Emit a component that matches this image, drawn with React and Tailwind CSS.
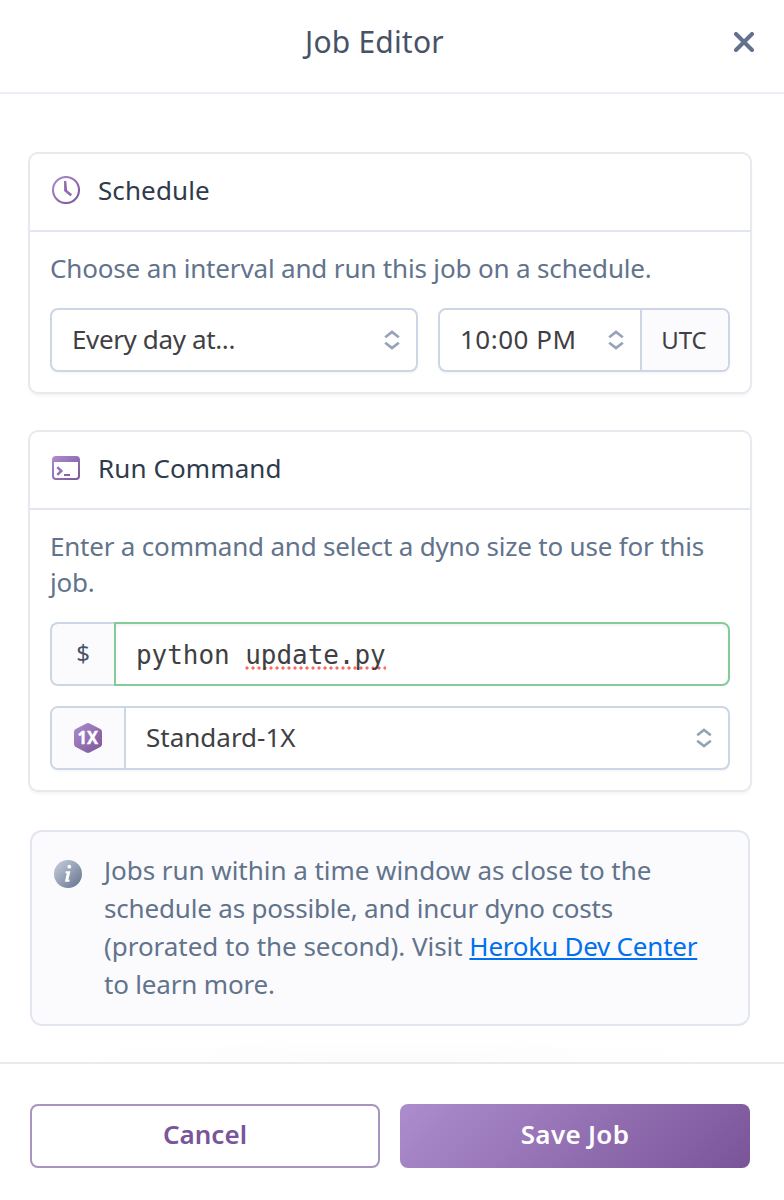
import React from "react";

function UpDown() {
  return (
    <svg className="h-5 w-4 shrink-0" viewBox="0 0 16 20" fill="none" stroke="#96a3b6" strokeWidth="2.7">
      <path d="M1.200 7.200 8 1.900l6.800 5.300" />
      <path d="M1.200 12.800 8 18.100l6.800-5.300" />
    </svg>
  );
}

function Gradient({ id, from = "#ad8dcd", to = "#7a5499" }) {
  return (
    <defs>
      <linearGradient id={id} x1="0" y1="0" x2="1" y2="1">
        <stop offset="0" stopColor={from} />
        <stop offset="1" stopColor={to} />
      </linearGradient>
    </defs>
  );
}

function ClockIcon() {
  return (
    <svg className="h-7 w-7" viewBox="0 0 28 28" fill="none">
      <Gradient id="clock" />
      <circle cx="14" cy="14" r="13" stroke="url(#clock)" strokeWidth="2.1" />
      <path d="M12.100 5h2.200l.8 9.200 5 4-1.700 2.100-6.300-5.200z" fill="#9068b0" />
    </svg>
  );
}

function TerminalIcon() {
  return (
    <svg className="h-6 w-7" viewBox="0 0 28 24" fill="none">
      <Gradient id="term" />
      <path
        fillRule="evenodd"
        fill="url(#term)"
        d="M4 0h20a4 4 0 0 1 4 4v16a4 4 0 0 1-4 4H4a4 4 0 0 1-4-4V4a4 4 0 0 1 4-4zM2 6v14a2 2 0 0 0 2 2h20a2 2 0 0 0 2-2V6z"
      />
      <path d="M5.300 11.200 9.300 15l-4 3.800" stroke="#966fb5" strokeWidth="2.500" />
      <path d="M12 19h6" stroke="#8a63aa" strokeWidth="2" />
    </svg>
  );
}

function DynoIcon() {
  return (
    <svg className="h-[30px] w-7" viewBox="0 0 28 30">
      <Gradient id="dyno" />
      <path
        fill="url(#dyno)"
        d="M12.300.5a3.500 3.500 0 0 1 3.400 0l10.600 5.600A3.200 3.200 0 0 1 28 9v12a3.200 3.200 0 0 1-1.700 2.900l-10.600 5.600a3.500 3.500 0 0 1-3.400 0L1.700 23.900A3.200 3.200 0 0 1 0 21V9a3.200 3.200 0 0 1 1.700-2.900z"
      />
      <text x="13.800" y="21" textAnchor="middle" textLength="20.500" lengthAdjust="spacingAndGlyphs" fill="#fff" stroke="#fff" strokeWidth="0.4" className="font-['Noto_Sans',sans-serif] text-[17px] font-bold">
        1X
      </text>
    </svg>
  );
}

function InfoIcon() {
  return (
    <svg className="h-7 w-7 shrink-0" viewBox="0 0 28 28">
      <Gradient id="info" from="#c8d1df" to="#62718c" />
      <circle cx="14" cy="14" r="14" fill="url(#info)" />
      <circle cx="15.300" cy="6.700" r="1.900" fill="#fff" />
      <path d="M11.800 11.200h4.600l-2 8.600h1.300l-.4 2h-4.400l1.900-8.600h-1.400z" fill="#fff" />
    </svg>
  );
}

function Card({ icon, title, children }) {
  return (
    <section className="rounded-lg bg-white shadow-[0_0_0_2px_#e8e8ef,0_3px_4px_rgba(0,0,0,0.07)]">
      <header className="flex h-[78px] items-center gap-[18px] border-b-2 border-[#e2e6f0] pb-1 pl-[22px]">
        {icon}
        <h2 className="text-[26px] leading-9 tracking-[0.1px] text-[#2f3b4c]">{title}</h2>
      </header>
      <div className="px-5 pt-[18px] pb-5">{children}</div>
    </section>
  );
}

export default function App() {
  return (
    <div className="flex h-[1200px] w-[784px] flex-col bg-white font-['Noto_Sans',sans-serif]">
      <header className="flex h-[94px] items-center justify-between border-b-2 border-[#ebeef4] pr-[30px] pb-[9px] pl-[305px]">
        <h1 className="text-[30px] leading-9 tracking-[0.2px] text-[#475266]">Job Editor</h1>
        <button aria-label="Close">
          <svg className="h-5 w-5" viewBox="0 0 20 20" stroke="#62718c" strokeWidth="4" strokeLinecap="round">
            <path d="M2 2l16 16M18 2 2 18" />
          </svg>
        </button>
      </header>

      <main className="flex h-[968px] flex-col bg-[radial-gradient(ellipse_360px_24px_at_50%_100%,#fbfbfb,#ffffff)] pt-[60px] pr-[34px] pl-[30px]">
        <Card icon={<ClockIcon />} title="Schedule">
          <p className="text-[26px] leading-9 tracking-[-0.16px] text-[#62738c]">Choose an interval and run this job on a schedule.</p>
          <div className="mt-[22px] flex h-16 gap-5 text-[26px] text-[#3f3f44]">
            <div className="flex w-[368px] items-center justify-between rounded-lg border-2 border-[#ccd6e5] bg-white pr-4 pl-5 shadow-[0_2px_2px_rgba(0,0,0,0.03)]">
              <span className="pb-[2px] tracking-[-0.37px]">Every day at...</span>
              <UpDown />
            </div>
            <div className="flex flex-1 rounded-lg border-2 border-[#ccd6e5] bg-white shadow-[0_2px_2px_rgba(0,0,0,0.03)]">
              <div className="flex flex-1 items-center justify-between pr-4 pl-5">
                <span className="pb-[2px] tracking-[0.5px]">10:00 PM</span>
                <UpDown />
              </div>
              <div className="flex w-[88px] items-center justify-center rounded-r-md border-l-2 border-[#ccd6e5] bg-[#fbfbfd] pr-[2px] text-[24px]">
                UTC
              </div>
            </div>
          </div>
        </Card>

        <div className="mt-10">
          <Card icon={<TerminalIcon />} title="Run Command">
            <p className="text-[26px] leading-9 tracking-[-0.2px] text-[#62738c]">
              Enter a command and select a dyno size to use for this
              <br />
              job.
            </p>
            <div className="mt-[22px] flex h-16">
              <div className="flex w-16 items-center justify-center rounded-l-lg border-2 border-r-0 border-[#ccd6e5] bg-[#fbfbfd] pb-[2px] text-[24px] text-[#475266]">
                $
              </div>
              <div className="flex flex-1 items-center rounded-r-lg border-2 border-[#84cb97] bg-white pt-[2px] pl-5 font-['DejaVu_Sans_Mono',monospace] text-[26px] leading-[30px] tracking-[-0.05px] whitespace-pre text-[#3f3f44] shadow-[inset_0_2px_3px_rgba(0,0,0,0.05)]">
                <span>python </span>
                <span className="bg-[radial-gradient(circle,#fb6a62_1.3px,transparent_1.9px)] bg-[length:6px_4px] bg-[position:-1px_26px] bg-repeat-x">update.py</span>
              </div>
            </div>
            <div className="mt-5 flex h-16 rounded-lg border-2 border-[#ccd6e5] bg-white text-[26px] text-[#3f3f44] shadow-[0_2px_2px_rgba(0,0,0,0.03)]">
              <div className="flex w-[74px] items-center justify-center rounded-l-md border-r-2 border-[#ccd6e5] bg-[#fbfbfd]">
                <DynoIcon />
              </div>
              <div className="flex flex-1 items-center justify-between pr-4 pl-5">
                <span className="pb-[2px]">Standard-1X</span>
                <UpDown />
              </div>
            </div>
          </Card>
        </div>

        <aside className="mt-10 flex h-[196px] gap-[22px] rounded-xl border-2 border-[#e2e6f0] bg-[#fbfbfd] pt-[19px] pl-[22px]">
          <div className="pt-[9px]">
            <InfoIcon />
          </div>
          <p className="text-[26px] leading-[38px] tracking-[-0.18px] text-[#62738c]">
            <span className="tracking-[-0.04px]">Jobs run within a time window as close to the</span>
            <br />
            schedule as possible, and incur dyno costs
            <br />
            <span className="tracking-[-0.04px]">(prorated to the second). Visit </span>
            <a className="tracking-[-0.22px] text-[#0070ee] underline decoration-2 underline-offset-2 [text-decoration-skip-ink:none]">Heroku Dev Center</a>
            <br />
            to learn more.
          </p>
        </aside>
      </main>

      <footer className="flex flex-1 gap-5 border-t-2 border-[#e9e9ef] bg-white pt-10 pl-[30px] text-[26px] font-semibold">
        <button className="h-16 w-[350px] rounded-lg border-2 border-[#a994c0] pb-[3px] text-[#79559b]">Cancel</button>
        <button className="h-16 w-[350px] rounded-lg bg-[linear-gradient(135deg,#ad8dcd,#7a5499)] pb-[3px] tracking-[0.3px] text-white">Save Job</button>
      </footer>
    </div>
  );
}
